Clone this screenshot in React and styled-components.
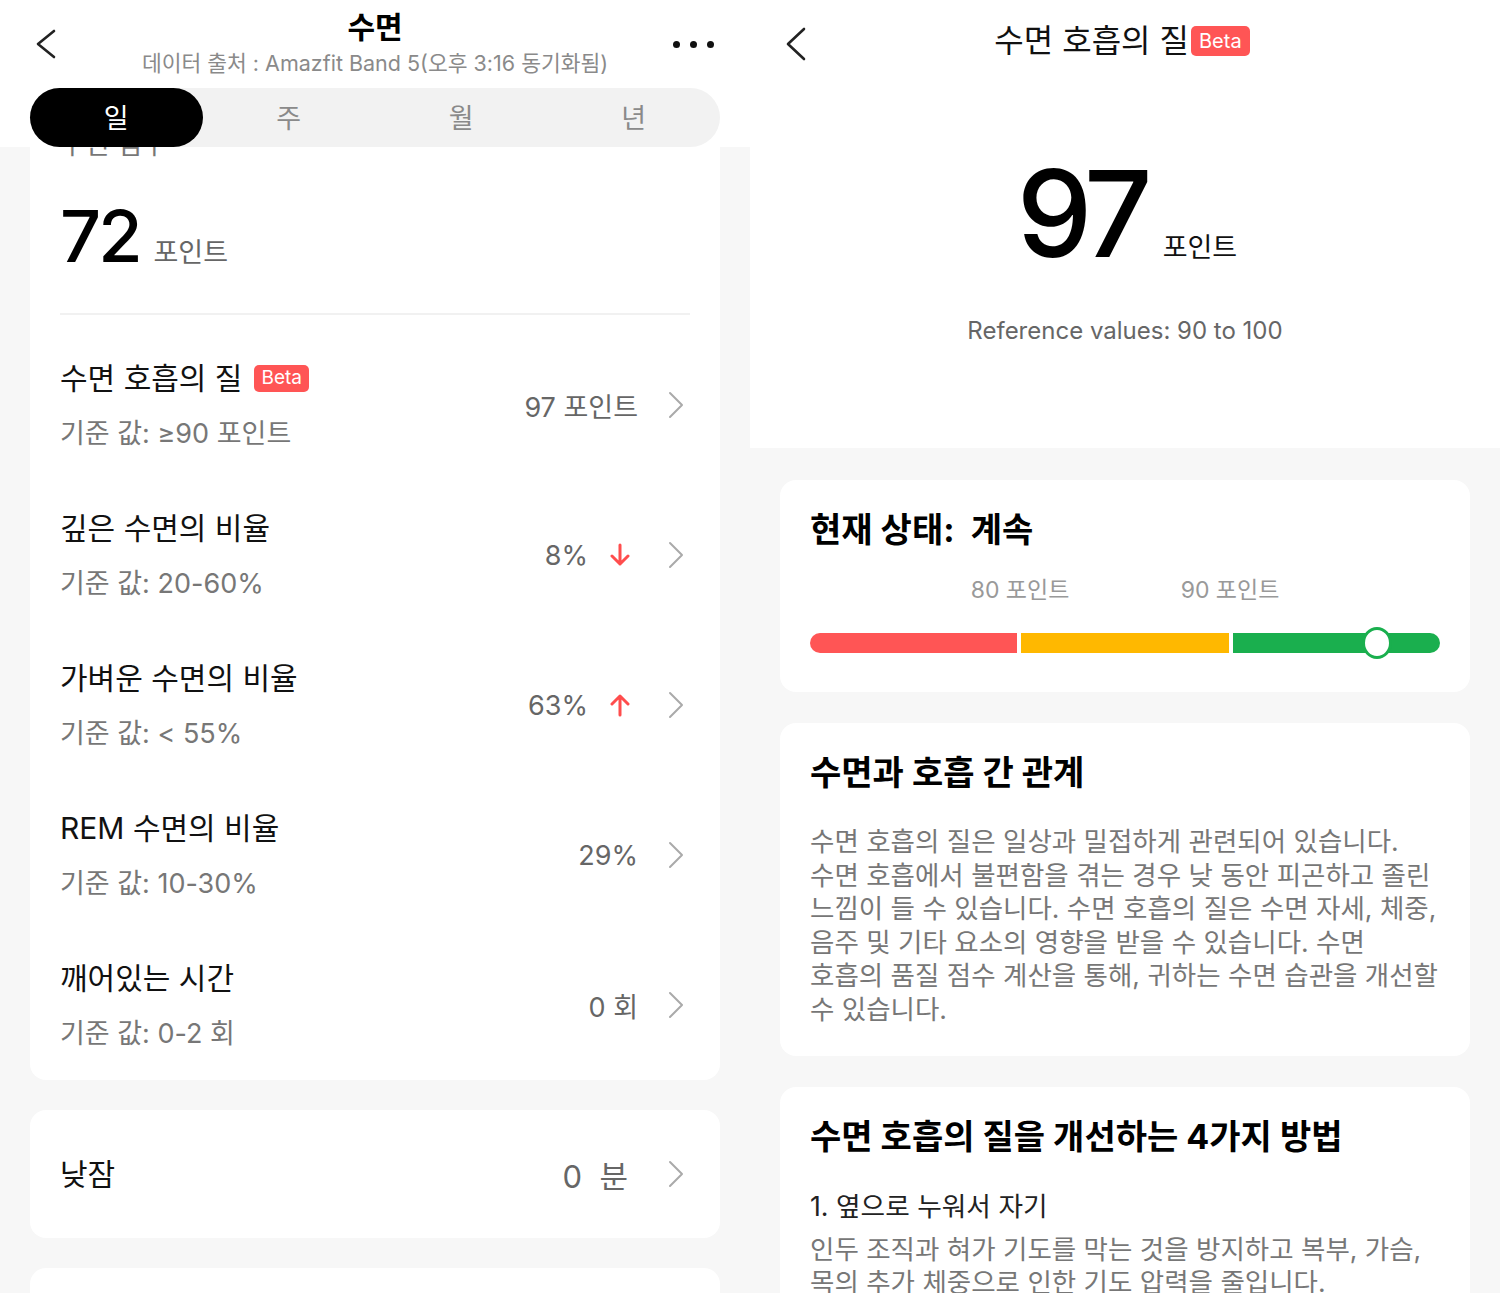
import React from 'react';
import styled, { createGlobalStyle } from 'styled-components';

const GlobalStyle = createGlobalStyle`
  html, body {
    margin: 0;
    padding: 0;
  }
  body {
    font-family: Inter, "Noto Sans CJK KR", sans-serif;
    background: #f7f7f7;
    color: #000;
  }
`;

const Screen = styled.div`
  display: flex;
  width: 1500px;
  height: 1293px;
  overflow: hidden;
`;

const Panel = styled.div`
  width: 750px;
  flex: none;
  display: flex;
  flex-direction: column;
  background: #f7f7f7;
  overflow: hidden;
`;

/* ---------- left panel ---------- */

const Header = styled.header`
  background: #fff;
  flex: none;
`;

const NavBar = styled.div`
  height: 88px;
  display: grid;
  grid-template-columns: 110px 1fr 110px;
  align-items: start;
`;

const NavSide = styled.div`
  display: flex;
  align-items: center;
  justify-content: ${({ right }) => (right ? 'flex-end' : 'flex-start')};
  height: 88px;
  padding: ${({ right }) => (right ? '0 36px 4px 0' : '0 0 4px 36px')};
`;

const TitleBlock = styled.div`
  display: flex;
  flex-direction: column;
  align-items: center;
  padding-top: 9px;
`;

const Title = styled.div`
  font-size: 30px;
  font-weight: 700;
  line-height: 36px;
`;

const Subtitle = styled.div`
  margin-top: 4px;
  font-size: 21.5px;
  line-height: 28px;
  color: #8a8a8a;
  white-space: nowrap;
`;

const Dots = styled.div`
  display: flex;
  gap: 10px;
  span {
    width: 7px;
    height: 7px;
    border-radius: 50%;
    background: #111;
  }
`;

const Tabs = styled.div`
  margin: 0 30px;
  height: 59px;
  border-radius: 30px;
  background: #f2f2f2;
  display: grid;
  grid-template-columns: repeat(4, 1fr);
`;

const Tab = styled.div`
  display: flex;
  align-items: center;
  justify-content: center;
  padding-bottom: 3px;
  border-radius: 30px;
  font-size: 27px;
  background: ${({ active }) => (active ? '#000' : 'transparent')};
  color: ${({ active }) => (active ? '#fff' : '#8a8a8a')};
`;

const Scroll = styled.div`
  flex: 1;
  overflow: hidden;
  padding: 0 30px;
`;

const Card = styled.section`
  background: #fff;
  border-radius: ${({ cut }) => (cut ? '0 0 16px 16px' : '16px')};
  margin-top: ${({ gap }) => gap || 0}px;
  display: flex;
  flex-direction: column;
`;

const ScoreLabel = styled.div`
  margin: -20px 30px 0;
  font-size: 27px;
  line-height: 36px;
  color: #777;
`;

const ScoreRow = styled.div`
  margin: 37px 30px 0;
  display: flex;
  align-items: baseline;
`;

const BigNumber = styled.span`
  font-size: ${({ size }) => size}px;
  line-height: 1;
  font-weight: 500;
  letter-spacing: ${({ size }) => (size > 100 ? -6 : -3)}px;
`;

const Unit = styled.span`
  margin-left: ${({ dark }) => (dark ? 16 : 14)}px;
  font-size: 27px;
  color: ${({ dark }) => (dark ? '#111' : '#666')};
`;

const Divider = styled.div`
  margin: 41px 30px 15px;
  height: 2px;
  background: #f1f1f1;
`;

const Row = styled.div`
  height: ${({ h }) => h || 150}px;
  padding: 0 30px;
  display: flex;
  align-items: center;
  justify-content: space-between;
`;

const RowText = styled.div`
  display: flex;
  flex-direction: column;
`;

const RowTitle = styled.div`
  display: flex;
  align-items: center;
  font-size: 30px;
  line-height: 40px;
  color: #111;
`;

const RowSub = styled.div`
  margin-top: 18px;
  font-size: 27px;
  line-height: 36px;
  color: #777;
`;

const Badge = styled.span`
  display: inline-flex;
  align-items: center;
  height: ${({ big }) => (big ? 30 : 27)}px;
  padding: 0 ${({ big }) => (big ? 8 : 7)}px;
  margin-left: ${({ big }) => (big ? 2 : 12)}px;
  border-radius: 5px;
  background: #ff5555;
  color: #fff;
  font-size: ${({ big }) => (big ? 20 : 19)}px;
`;

const RowValue = styled.div`
  display: flex;
  align-items: center;
  font-size: ${({ size }) => size || 27}px;
  color: #666;
  white-space: pre;
`;

const ArrowBox = styled.span`
  display: flex;
  margin: 0 8px 0 22px;
`;

const ChevronBox = styled.span`
  display: flex;
  margin-left: ${({ gap }) => gap || 30}px;
  margin-right: 6px;
`;

/* ---------- right panel ---------- */

const Hero = styled.div`
  height: 448px;
  flex: none;
  background: #fff;
  display: flex;
  flex-direction: column;
`;

const DetailNav = styled.div`
  height: 88px;
  position: relative;
  display: flex;
  align-items: center;
  justify-content: center;
`;

const BackCorner = styled.div`
  position: absolute;
  left: 36px;
  top: 27px;
  display: flex;
`;

const DetailTitle = styled.div`
  display: flex;
  align-items: center;
  margin: -6px 0 0 -6px;
  font-size: 32px;
  line-height: 44px;
  color: #111;
`;

const HeroScore = styled.div`
  margin-top: 66px;
  display: flex;
  align-items: baseline;
  justify-content: center;
  padding-left: 4px;
`;

const Reference = styled.div`
  margin-top: 41px;
  text-align: center;
  font-size: 24px;
  line-height: 32px;
  color: #666;
`;

const Sheet = styled.div`
  padding: 0 30px;
  display: flex;
  flex-direction: column;
`;

const InfoCard = styled.section`
  background: #fff;
  border-radius: 16px;
  margin-top: ${({ gap }) => gap}px;
  padding: 28px 30px ${({ bottom }) => bottom}px;
`;

const CardTitle = styled.h2`
  margin: 0;
  font-size: 34px;
  font-weight: 700;
  line-height: 44px;
  color: #000;
`;

const ScaleLabels = styled.div`
  margin-top: 23px;
  display: grid;
  grid-template-columns: repeat(3, 1fr);
  height: 30px;
`;

const ScaleLabel = styled.span`
  justify-self: end;
  transform: translateX(50%);
  font-size: 23px;
  line-height: 30px;
  color: #999;
  white-space: nowrap;
`;

const Bar = styled.div`
  position: relative;
  margin-top: 28px;
  height: 20px;
  display: grid;
  grid-template-columns: repeat(3, 1fr);
  gap: 4px;
`;

const Segment = styled.div`
  background: ${({ color }) => color};
  border-radius: ${({ round }) => round};
`;

const Knob = styled.div`
  position: absolute;
  top: 50%;
  width: 24px;
  height: 26px;
  border-radius: 50%;
  border: 3px solid #1aaf4e;
  background: #fff;
  transform: translate(-50%, -50%);
`;

const Body = styled.p`
  margin: ${({ top }) => top}px 0 0;
  font-size: 26.5px;
  line-height: 33.6px;
  color: #777;
  white-space: nowrap;
`;

const Step = styled.div`
  margin-top: 29px;
  font-size: 26.7px;
  line-height: 36px;
  color: #222;
`;

function Chevron({ dir = 'right', color = '#aaa', w = 16, h = 28, stroke = 2 }) {
  const d = dir === 'right' ? `M2 2 L${w - 2} ${h / 2} L2 ${h - 2}` : `M${w - 2} 2 L2 ${h / 2} L${w - 2} ${h - 2}`;
  return (
    <svg width={w} height={h} viewBox={`0 0 ${w} ${h}`}>
      <path d={d} fill="none" stroke={color} strokeWidth={stroke} strokeLinecap="round" strokeLinejoin="round" />
    </svg>
  );
}

function Arrow({ up }) {
  return (
    <svg width="20" height="24" viewBox="0 0 20 24">
      {up ? (
        <path d="M10 22 V3 M2 11 L10 3 L18 11" fill="none" stroke="#ff4d4d" strokeWidth="3" strokeLinecap="round" strokeLinejoin="round" />
      ) : (
        <path d="M10 2 V21 M2 13 L10 21 L18 13" fill="none" stroke="#ff4d4d" strokeWidth="3" strokeLinecap="round" strokeLinejoin="round" />
      )}
    </svg>
  );
}

const metrics = [
  { title: '수면 호흡의 질', beta: true, sub: '기준 값: ≥90 포인트', value: '97 포인트' },
  { title: '깊은 수면의 비율', sub: '기준 값: 20-60%', value: '8%', arrow: 'down' },
  { title: '가벼운 수면의 비율', sub: '기준 값: < 55%', value: '63%', arrow: 'up' },
  { title: 'REM 수면의 비율', sub: '기준 값: 10-30%', value: '29%' },
  { title: '깨어있는 시간', sub: '기준 값: 0-2 회', value: '0 회' },
];

const tabs = ['일', '주', '월', '년'];

const relation = [
  '수면 호흡의 질은 일상과 밀접하게 관련되어 있습니다.',
  '수면 호흡에서 불편함을 겪는 경우 낮 동안 피곤하고 졸린',
  '느낌이 들 수 있습니다. 수면 호흡의 질은 수면 자세, 체중,',
  '음주 및 기타 요소의 영향을 받을 수 있습니다. 수면',
  '호흡의 품질 점수 계산을 통해, 귀하는 수면 습관을 개선할',
  '수 있습니다.',
];

function SleepSummary() {
  return (
    <Panel>
      <Header>
        <NavBar>
          <NavSide>
            <Chevron dir="left" color="#222" w={20} h={30} stroke={2.6} />
          </NavSide>
          <TitleBlock>
            <Title>수면</Title>
            <Subtitle>데이터 출처 : Amazfit Band 5(오후 3:16 동기화됨)</Subtitle>
          </TitleBlock>
          <NavSide right>
            <Dots>
              <span />
              <span />
              <span />
            </Dots>
          </NavSide>
        </NavBar>
        <Tabs>
          {tabs.map((t, i) => (
            <Tab key={t} active={i === 0}>{t}</Tab>
          ))}
        </Tabs>
      </Header>
      <Scroll>
        <Card cut>
          <ScoreLabel>수면 점수</ScoreLabel>
          <ScoreRow>
            <BigNumber size={72}>72</BigNumber>
            <Unit>포인트</Unit>
          </ScoreRow>
          <Divider />
          {metrics.map((m) => (
            <Row key={m.title}>
              <RowText>
                <RowTitle>
                  {m.title}
                  {m.beta && <Badge>Beta</Badge>}
                </RowTitle>
                <RowSub>{m.sub}</RowSub>
              </RowText>
              <RowValue>
                {m.value}
                {m.arrow && (
                  <ArrowBox>
                    <Arrow up={m.arrow === 'up'} />
                  </ArrowBox>
                )}
                <ChevronBox>
                  <Chevron />
                </ChevronBox>
              </RowValue>
            </Row>
          ))}
        </Card>
        <Card gap={30}>
          <Row h={128}>
            <RowTitle>낮잠</RowTitle>
            <RowValue size={31}>
              {'0  분'}
              <ChevronBox gap={40}>
                <Chevron />
              </ChevronBox>
            </RowValue>
          </Row>
        </Card>
        <Card gap={30}>
          <Row h={128} />
        </Card>
      </Scroll>
    </Panel>
  );
}

function BreathingDetail() {
  const score = 97;
  const knobLeft = `${((score - 70) / 30) * 100}%`;
  return (
    <Panel>
      <Hero>
        <DetailNav>
          <BackCorner>
            <Chevron dir="left" color="#222" w={20} h={34} stroke={2.6} />
          </BackCorner>
          <DetailTitle>
            수면 호흡의 질
            <Badge big>Beta</Badge>
          </DetailTitle>
        </DetailNav>
        <HeroScore>
          <BigNumber size={120}>{score}</BigNumber>
          <Unit dark>포인트</Unit>
        </HeroScore>
        <Reference>Reference values: 90 to 100</Reference>
      </Hero>
      <Sheet>
        <InfoCard gap={32} bottom={39}>
          <CardTitle>현재 상태:&nbsp; 계속</CardTitle>
          <ScaleLabels>
            <ScaleLabel>80 포인트</ScaleLabel>
            <ScaleLabel>90 포인트</ScaleLabel>
          </ScaleLabels>
          <Bar>
            <Segment color="#ff5555" round="10px 0 0 10px" />
            <Segment color="#ffb800" round="0" />
            <Segment color="#1aaf4e" round="0 10px 10px 0" />
            <Knob style={{ left: knobLeft }} />
          </Bar>
        </InfoCard>
        <InfoCard gap={31} bottom={29}>
          <CardTitle>수면과 호흡 간 관계</CardTitle>
          <Body top={30}>
            {relation.map((line, i) => (
              <React.Fragment key={line}>
                {line}
                {i < relation.length - 1 && <br />}
              </React.Fragment>
            ))}
          </Body>
        </InfoCard>
        <InfoCard gap={31} bottom={40}>
          <CardTitle>수면 호흡의 질을 개선하는 4가지 방법</CardTitle>
          <Step>1. 옆으로 누워서 자기</Step>
          <Body top={9}>
            인두 조직과 혀가 기도를 막는 것을 방지하고 복부, 가슴,
            <br />
            목의 추가 체중으로 인한 기도 압력을 줄입니다.
          </Body>
        </InfoCard>
      </Sheet>
    </Panel>
  );
}

export default function App() {
  return (
    <>
      <GlobalStyle />
      <Screen>
        <SleepSummary />
        <BreathingDetail />
      </Screen>
    </>
  );
}
